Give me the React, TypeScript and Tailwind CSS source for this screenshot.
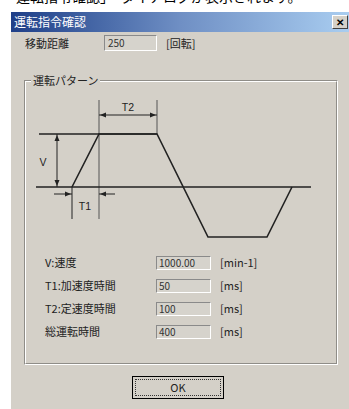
import React from 'react'

const font = { fontFamily: '"Noto Sans CJK JP", "Liberation Sans", sans-serif' }

function Field({ label, value, unit }: { label: string; value: string; unit: string }) {
  return (
    <div className="flex h-[23px] items-center">
      <div className="w-[131px] pl-[20px] text-[11px] leading-none text-[#222]">{label}</div>
      <div className="flex h-[14px] w-[55px] items-center border-t border-l border-b border-r border-t-[#8a8a8a] border-l-[#8a8a8a] border-b-white border-r-white bg-[#d6d3cc] pl-[2px] text-[10px] leading-none text-[#333]">
        {value}
      </div>
      <div className="pl-[9px] text-[11px] leading-none text-[#222]">{unit}</div>
    </div>
  )
}

function Arrow({ x, y, dir }: { x: number; y: number; dir: 'l' | 'r' | 'u' | 'd' }) {
  const pts = {
    l: `${x},${y} ${x + 6},${y - 2.5} ${x + 6},${y + 2.5}`,
    r: `${x},${y} ${x - 6},${y - 2.5} ${x - 6},${y + 2.5}`,
    u: `${x},${y} ${x - 2.5},${y + 6} ${x + 2.5},${y + 6}`,
    d: `${x},${y} ${x - 2.5},${y - 6} ${x + 2.5},${y - 6}`,
  }[dir]
  return <polygon points={pts} fill="#222" />
}

function Pattern() {
  return (
    <svg width="300" height="150" className="block">
      <g stroke="#222" strokeWidth="1.3" fill="none">
        {/* T2 guides */}
        <line x1="74" y1="8" x2="74" y2="127" strokeWidth="1" stroke="#555" />
        <line x1="132" y1="8" x2="132" y2="42" strokeWidth="1" stroke="#555" />
        <line x1="74" y1="23" x2="132" y2="23" strokeWidth="1" />
        {/* V level */}
        <line x1="14" y1="42" x2="132" y2="42" />
        <line x1="32" y1="42" x2="32" y2="95" strokeWidth="1" />
        {/* baseline */}
        <line x1="11" y1="95" x2="286" y2="95" />
        {/* waveform */}
        <polyline points="47,95 74,42 132,42 183,145 242,145 267,95" strokeWidth="1.6" />
        {/* T1 guides */}
        <line x1="47" y1="95" x2="47" y2="127" strokeWidth="1" />
        <line x1="29" y1="102" x2="47" y2="102" strokeWidth="1" />
        <line x1="74" y1="102" x2="90" y2="102" strokeWidth="1" />
      </g>
      <Arrow x={75} y={23} dir="l" />
      <Arrow x={131} y={23} dir="r" />
      <Arrow x={32} y={43} dir="u" />
      <Arrow x={32} y={94} dir="d" />
      <Arrow x={46} y={102} dir="r" />
      <Arrow x={75} y={102} dir="l" />
      <g fill="#222" fontSize="10.5" fontFamily='"Liberation Sans", sans-serif'>
        <text x="103" y="19" textAnchor="middle">T2</text>
        <text x="18" y="74" textAnchor="middle">V</text>
        <text x="60" y="118" textAnchor="middle">T1</text>
      </g>
    </svg>
  )
}

export default function App() {
  return (
    <div className="h-[409px] w-[349px] overflow-hidden bg-white" style={font}>
      {/* cut-off text of the page above */}
      <div className="h-[11px] overflow-hidden">
        <div className="-mt-[12px] whitespace-nowrap pl-[2px] text-[14px] leading-[16px] text-black">
          「運転指令確認」　ダイアログが表示されます。
        </div>
      </div>

      <div className="ml-[10px] flex h-[398px] flex-col border-l border-t border-white bg-[#d4d0c8]">
        {/* title bar */}
        <div className="flex h-[20px] items-center justify-between bg-gradient-to-r from-[#1f3f88] via-[#6f8fc4] to-[#a9cdf0] pl-[3px] pr-[1px]">
          <span className="text-[12px] leading-none text-white">運転指令確認</span>
          <div className="flex h-[14px] w-[16px] items-center justify-center border border-t-white border-l-white border-b-[#404040] border-r-[#404040] bg-[#d4d0c8] text-[10px] font-bold leading-none text-black">
            ✕
          </div>
        </div>

        {/* move distance */}
        <div className="mt-[3px] flex h-[16px] items-center">
          <div className="w-[93px] pl-[14px] text-[11px] leading-none text-[#222]">移動距離</div>
          <div className="flex h-[16px] w-[53px] items-center border border-t-[#8a8a8a] border-l-[#8a8a8a] border-b-white border-r-white bg-[#d6d3cc] pl-[3px] text-[10px] leading-none text-[#333]">
            250
          </div>
          <div className="pl-[9px] text-[11px] leading-none text-[#222]">[回転]</div>
        </div>

        {/* group box */}
        <div className="relative ml-[13px] mt-[29px] h-[285px] w-[314px] border border-t-[#8f8d88] border-l-[#8f8d88] border-b-white border-r-white">
          <div className="absolute inset-0 border border-t-white border-l-white border-b-[#8f8d88] border-r-[#8f8d88]" />
          <div className="absolute -top-[7px] left-[6px] bg-[#d4d0c8] px-[2px] text-[11px] leading-[13px] text-[#222]">
            運転パターン
          </div>
          <div className="relative pt-[11px]">
            <Pattern />
          </div>
          <div className="relative mt-[9px] flex flex-col">
            <Field label="V:速度" value="1000.00" unit="[min-1]" />
            <Field label="T1:加速度時間" value="50" unit="[ms]" />
            <Field label="T2:定速度時間" value="100" unit="[ms]" />
            <Field label="総運転時間" value="400" unit="[ms]" />
          </div>
        </div>

        {/* OK */}
        <div className="mt-[11px] flex">
          <div className="ml-[121px] flex h-[23px] w-[92px] items-center justify-center border border-black bg-[#d4d0c8] p-[2px]">
            <div className="flex h-full w-full items-center justify-center border border-dotted border-[#333] text-[11px] leading-none text-[#222]">
              OK
            </div>
          </div>
        </div>
      </div>
    </div>
  )
}
